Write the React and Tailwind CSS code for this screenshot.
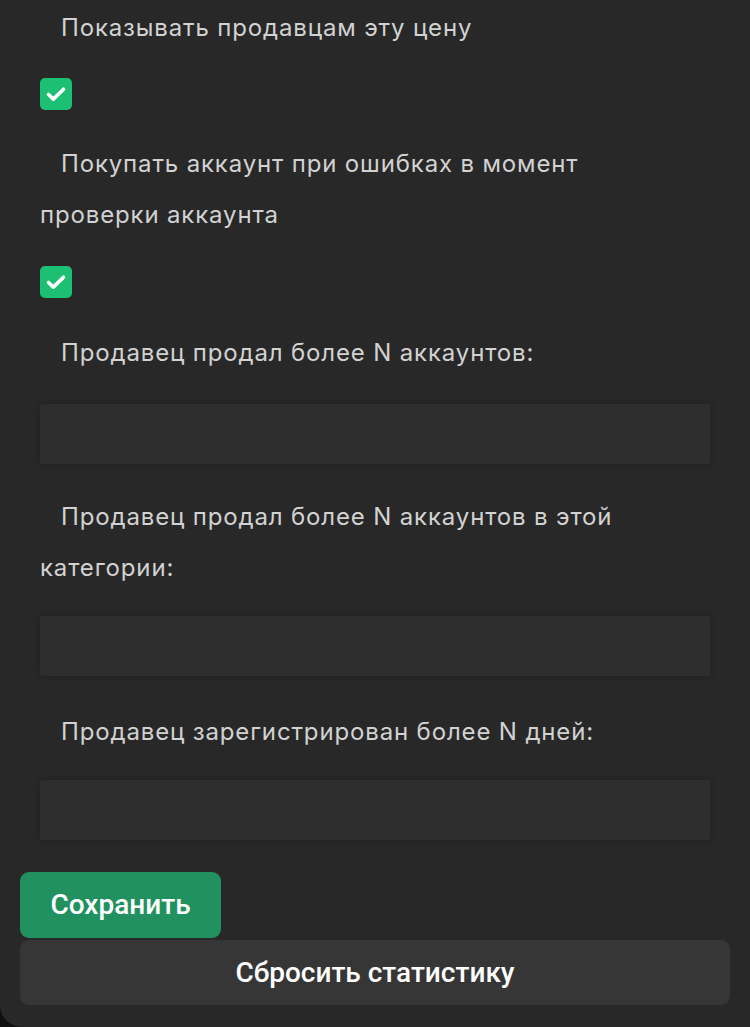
import React from "react";

const font = { fontFamily: "Inter, 'Noto Sans', sans-serif" };

function Label({ children, className = "" }) {
  return (
    <div className={"w-[640px] text-[24px] tracking-[0.85px] leading-[51px] text-[#d2d2d2] indent-[21px] " + className}>
      {children}
    </div>
  );
}

function Check({ className = "" }) {
  return (
    <div className={"w-8 h-8 rounded-[5px] bg-[#1dbf73] flex items-center justify-center " + className}>
      <svg width="24" height="24" viewBox="0 0 24 24" fill="none">
        <path d="M4.5 12.5l4.8 4.6L19.5 7.2" stroke="white" strokeWidth="3.6" strokeLinecap="round" strokeLinejoin="round" />
      </svg>
    </div>
  );
}

function Field({ className = "" }) {
  return (
    <div className={"h-[60px] w-[670px] bg-[#2e2e2e] rounded-[3px] shadow-[0_0_6px_rgba(0,0,0,0.25)] " + className} />
  );
}

export default function App() {
  return (
    <div className="min-h-[1027px] bg-[#101010]" style={font}>
      <div className="h-[1027px] bg-[#282828] rounded-bl-[22px] flex flex-col overflow-hidden">
        <div className="px-10 pt-[2px] flex flex-col">
          <Label>Показывать продавцам эту цену</Label>
          <Check className="mt-[25px]" />
          <Label className="mt-[28px]">Покупать аккаунт при ошибках в момент проверки аккаунта</Label>
          <Check className="mt-[26px]" />
          <Label className="mt-[29px]">Продавец продал более N аккаунтов:</Label>
          <Field className="mt-[26px]" />
          <Label className="mt-[27px]">Продавец продал более N аккаунтов в этой категории:</Label>
          <Field className="mt-[23px]" />
          <Label className="mt-[30px]">Продавец зарегистрирован более N дней:</Label>
          <Field className="mt-[23px]" />
        </div>
        <div className="px-5 flex flex-col" style={{ fontFamily: "Roboto, 'Noto Sans', sans-serif" }}>
          <button className="mt-[32px] w-[201px] h-[66px] rounded-[9px] bg-[#21925f] text-white text-[28px] font-medium">
            Сохранить
          </button>
          <button className="mt-[2px] w-[710px] h-[65px] rounded-[9px] bg-[#363636] text-white text-[28px] font-medium">
            Сбросить статистику
          </button>
        </div>
      </div>
    </div>
  );
}
